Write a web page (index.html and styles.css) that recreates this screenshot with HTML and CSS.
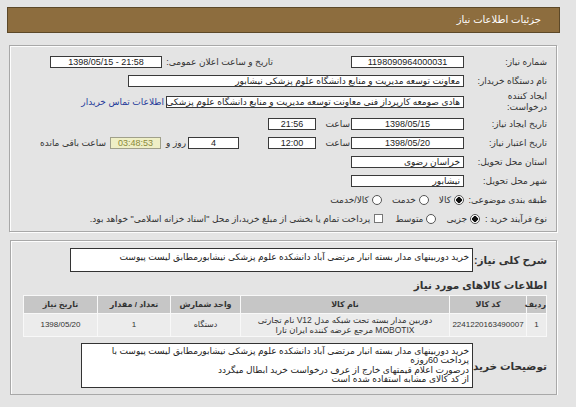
FILE: index.html
```html
<!DOCTYPE html>
<html lang="fa" dir="rtl">
<head>
<meta charset="utf-8">
<title>جزئیات اطلاعات نیاز</title>
<link rel="stylesheet" href="styles.css">
</head>
<body>
<div class="page">
  <div class="titlebar">جزئیات اطلاعات نیاز</div>

  <div class="box box1">
    <div class="row">
      <div class="lbl">شماره نیاز:</div>
      <div class="inp w113 c">1198090964000031</div>
      <div class="lbl-pub">تاریخ و ساعت اعلان عمومی:</div>
      <div class="inp w112 c ltr">1398/05/15 - 21:58</div>
    </div>
    <div class="row">
      <div class="lbl">نام دستگاه خریدار:</div>
      <div class="inp w336">معاونت توسعه مدیریت و منابع دانشگاه علوم پزشکی نیشابور</div>
    </div>
    <div class="row row-tall">
      <div class="lbl lbl-2">ایجاد کننده<br>درخواست:</div>
      <div class="inp w298">هادی صومعه کارپرداز فنی معاونت توسعه مدیریت و منابع دانشگاه علوم پزشکی</div>
      <a class="contact" href="#">اطلاعات تماس خریدار</a>
    </div>
    <div class="row">
      <div class="lbl">تاریخ ایجاد نیاز:</div>
      <div class="inp w113 c">1398/05/15</div>
      <div class="hour">ساعت</div>
      <div class="inp w48 c">21:56</div>
    </div>
    <div class="row">
      <div class="lbl">تاریخ اعتبار نیاز:</div>
      <div class="inp w113 c">1398/05/20</div>
      <div class="hour">ساعت</div>
      <div class="inp w48 c">12:00</div>
      <div class="inp w51 c days">4</div>
      <div class="dayand">روز و</div>
      <div class="timer">03:48:53</div>
      <div class="remain">ساعت باقی مانده</div>
    </div>
    <div class="row">
      <div class="lbl">استان محل تحویل:</div>
      <div class="inp w113">خراسان رضوی</div>
    </div>
    <div class="row">
      <div class="lbl">شهر محل تحویل:</div>
      <div class="inp w113">نیشابور</div>
    </div>
    <div class="row">
      <div class="lbl">طبقه بندی موضوعی:</div>
      <div class="opts">
        <span class="radio on"></span><span class="opt">کالا</span>
        <span class="radio"></span><span class="opt">خدمت</span>
        <span class="radio"></span><span class="opt">کالا/خدمت</span>
      </div>
    </div>
    <div class="row">
      <div class="lbl lbl-auto">نوع فرآیند خرید :</div>
      <div class="opts">
        <span class="radio on"></span><span class="opt">جزیی</span>
        <span class="radio"></span><span class="opt">متوسط</span>
        <span class="check"></span><span class="opt">پرداخت تمام یا بخشی از مبلغ خرید،از محل "اسناد خزانه اسلامی" خواهد بود.</span>
      </div>
    </div>
  </div>

  <div class="box box2">
    <div class="desc-row">
      <div class="head-lbl">شرح کلی نیاز:</div>
      <div class="desc">خرید دوربینهای مدار بسته انبار مرتضی آباد دانشکده علوم پزشکی نیشابورمطابق لیست پیوست</div>
    </div>
    <div class="section-title">اطلاعات کالاهای مورد نیاز</div>
    <table class="goods">
      <colgroup>
        <col class="c-row"><col class="c-code"><col class="c-name"><col class="c-unit"><col class="c-qty"><col class="c-date">
      </colgroup>
      <thead>
        <tr><th>ردیف</th><th>کد کالا</th><th>نام کالا</th><th>واحد شمارش</th><th>تعداد / مقدار</th><th>تاریخ نیاز</th></tr>
      </thead>
      <tbody>
        <tr>
          <td>1</td>
          <td>2241220163490007</td>
          <td class="name">دوربین مدار بسته تحت شبکه مدل V12 نام تجارتی MOBOTIX مرجع عرضه کننده ایران تارا</td>
          <td>دستگاه</td>
          <td>1</td>
          <td>1398/05/20</td>
        </tr>
      </tbody>
    </table>
    <div class="notes-row">
      <div class="head-lbl">توضیحات خریدار:</div>
      <div class="notes">خرید دوربینهای مدار بسته انبار مرتضی آباد دانشکده علوم پزشکی نیشابورمطابق لیست پیوست با<br>پرداخت 60روزه<br>درصورت اعلام قیمتهای خارج از عرف درخواست خرید ابطال میگردد<br>از کد کالای مشابه استفاده شده است</div>
    </div>
  </div>
</div>
</body>
</html>
```

FILE: styles.css
```css
* { box-sizing: border-box; }

html, body { margin: 0; padding: 0; }

body {
  background: #e4e4e4;
  color: #222;
  direction: rtl;
  font-family: "Liberation Sans", "DejaVu Sans", sans-serif;
  font-size: 9px;
}

.page {
  width: 553px;
  margin: 7px auto 0 7px;
}

.titlebar {
  height: 26px;
  background: #8d6d3e;
  border: 1px solid #5c4828;
  color: #fff;
  font-size: 10px;
  line-height: 24px;
  padding-right: 18px;
}

.box {
  border: 1px solid #a8a8a8;
  box-shadow: inset 1px 1px 0 #fdfdfd, 1px 1px 0 #fdfdfd;
  padding: 6px 9px 3px 4px;
}

.box1 {
  margin: 12px 3px 0 2px;
}

.box2 {
  margin: 8px 3px 0 3px;
  padding: 7px 9px 6px 4px;
}

.row {
  display: flex;
  align-items: center;
  height: 19px;
  white-space: nowrap;
}

.row-tall { height: 24px; }

.lbl {
  width: 83px;
  flex: none;
  color: #333;
}

.lbl-2 { line-height: 11px; }

.lbl-auto { width: auto; margin-left: 5px; }

.inp {
  flex: none;
  height: 12px;
  background: #fff;
  border: 1px solid #3a3a3a;
  line-height: 10px;
  padding: 0 3px;
  overflow: hidden;
  white-space: nowrap;
  color: #222;
}

.c { text-align: center; }

.ltr { direction: ltr; }

.w113 { width: 113px; }
.w112 { width: 112px; }
.w336 { width: 336px; }
.w298 { width: 298px; }
.w48 { width: 48px; }
.w51 { width: 51px; }

.lbl-pub {
  width: 111px;
  flex: none;
  margin-right: 78px;
  color: #333;
}

.contact {
  margin-right: 2px;
  color: #1f3a9a;
  text-decoration: none;
}

.hour {
  width: 35px;
  flex: none;
  padding-right: 1px;
  color: #333;
}

.days { margin-right: 29px; }

.dayand {
  width: 27px;
  flex: none;
  padding-right: 2px;
  color: #333;
}

.timer {
  flex: none;
  width: 51px;
  height: 12px;
  background: #efefc6;
  border: 1px solid #a0a08a;
  color: #8a8a3a;
  line-height: 10px;
  text-align: center;
}

.remain {
  margin-right: 4px;
  color: #333;
}

.opts {
  display: flex;
  align-items: center;
  color: #333;
}

.radio {
  flex: none;
  width: 10px;
  height: 10px;
  border-radius: 50%;
  border: 1px solid #555;
  background: #fff;
  margin-left: 3px;
}

.radio.on {
  background: radial-gradient(circle, #111 0 2.6px, #fff 3px);
}

.opt { margin-left: 10px; }

.check {
  flex: none;
  width: 9px;
  height: 9px;
  border: 1px solid #777;
  background: #fff;
  margin-left: 4px;
  margin-right: 2px;
}

/* second box */
.desc-row, .notes-row {
  display: flex;
  align-items: center;
}

.head-lbl {
  width: 74px;
  flex: none;
  font-weight: bold;
  font-size: 10.5px;
  color: #333;
  white-space: nowrap;
}

.desc {
  width: 403px;
  height: 24px;
  background: #fff;
  border: 1px solid #333;
  padding: 2px 3px;
  line-height: 12px;
  white-space: nowrap;
  overflow: hidden;
}

.section-title {
  margin-top: 7px;
  font-weight: bold;
  font-size: 10.5px;
  color: #333;
  line-height: 13px;
}

.goods {
  width: 524px;
  margin-top: 3px;
  border-collapse: separate;
  border-spacing: 1px;
  background: #f8f8f8;
  font-size: 8px;
  color: #333;
  table-layout: fixed;
}

.c-row { width: 19px; }
.c-code { width: 76px; }
.c-name { width: 208px; }
.c-unit { width: 69px; }
.c-qty { width: 72px; }
.c-date { width: 73px; }

.goods th {
  height: 17px;
  background: #c6c6c6;
  font-weight: bold;
  font-size: 8px;
  padding: 0;
  text-align: center;
}

.goods td {
  height: 22px;
  background: #ececec;
  padding: 0 2px;
  text-align: center;
  line-height: 10px;
  white-space: nowrap;
  overflow: hidden;
}

.goods td.name {
  white-space: normal;
  font-size: 8.5px;
}

.notes-row { margin-top: 6px; }

.notes {
  width: 392px;
  height: 45px;
  background: #fff;
  border: 1px solid #333;
  padding: 3px 3px 0;
  line-height: 9.4px;
  white-space: nowrap;
  overflow: hidden;
}
```
